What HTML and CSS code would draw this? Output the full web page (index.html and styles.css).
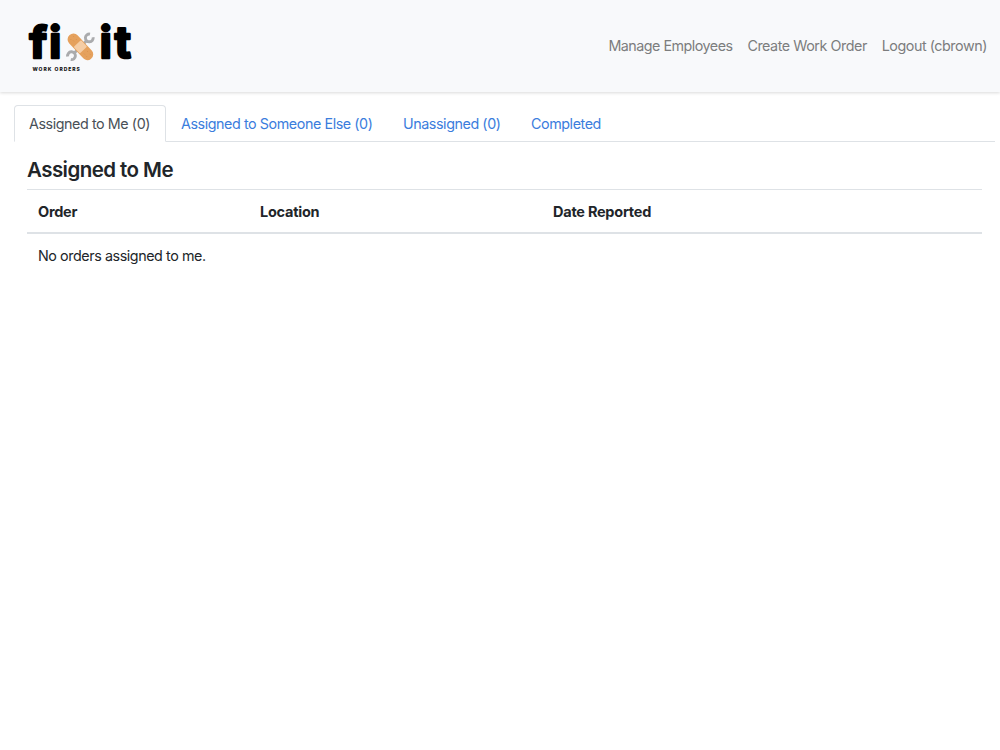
FILE: index.html
```html
<!DOCTYPE html>
<html lang="en">
<head>
<meta charset="utf-8">
<title>Fixit Work Orders</title>
<link rel="stylesheet" href="styles.css">
</head>
<body>
<header class="navbar">
  <a class="brand" href="#" aria-label="Fixit work orders">
    <svg class="logo" width="120" height="62" viewBox="0 0 120 62">
      <g class="wordmark">
        <text x="9.5 29.3" y="43">fi</text>
        <text x="79.8 94.8" y="43">it</text>
      </g>
      <g transform="translate(60.4 31.8)">
        <g class="wrench" transform="rotate(45)">
          <path d="M0-9V9"/>
          <path d="M-2.2-15.8A3.9 3.9 0 1 0 2.2-15.8M-2.2 15.8A3.9 3.9 0 1 1 2.2 15.8"/>
        </g>
        <g transform="rotate(47)">
          <rect class="bandage" x="-16" y="-5.8" width="32" height="11.6" rx="5.6"/>
          <rect class="pad" x="-4.5" y="-5" width="9" height="10" rx="1"/>
          <path class="holes" d="M-12-2h.1M-9 1h.1M-12 2h.1M-8-2h.1M8-2h.1M11 2h.1M12-2h.1M8 2h.1"/>
        </g>
      </g>
      <text class="tagline" x="12.5" y="55.5" textLength="47">WORK ORDERS</text>
    </svg>
  </a>
  <nav class="menu">
    <a class="employees" href="#">Manage Employees</a>
    <a class="create" href="#">Create Work Order</a>
    <a class="logout" href="#">Logout (cbrown)</a>
  </nav>
</header>
<main class="content">
  <nav class="tabs">
    <a class="tab mine active" href="#">Assigned to Me (0)</a>
    <a class="tab others" href="#">Assigned to Someone Else (0)</a>
    <a class="tab unassigned" href="#">Unassigned (0)</a>
    <a class="tab completed" href="#">Completed</a>
  </nav>
  <section class="panel">
    <h1>Assigned to Me</h1>
    <table>
      <thead><tr><th class="order">Order</th><th class="location">Location</th><th>Date Reported</th></tr></thead>
      <tbody><tr><td colspan="3">No orders assigned to me.</td></tr></tbody>
    </table>
  </section>
</main>
</body>
</html>
```

FILE: styles.css
```css
* { box-sizing: border-box; }
body {
  margin: 0;
  background: #fff;
  color: #212529;
  font: 14.3px/22px Inter, "Liberation Sans", sans-serif;
  letter-spacing: -0.42px;
}
a { text-decoration: none; white-space: nowrap; }
.navbar {
  height: 92px;
  padding: 0 13px 0 20px;
  display: flex;
  align-items: center;
  justify-content: space-between;
  background: #f8f9fb;
  box-shadow: 0 1px 3px rgba(0, 0, 0, .15);
}
.brand { display: flex; }
.logo { display: block; overflow: visible; }
.wordmark {
  font: 700 44px Inter, sans-serif;
  letter-spacing: 0;
  fill: #000;
  stroke: #000;
  stroke-width: 2.6px;
  stroke-linejoin: round;
}
.tagline { font: 800 5px Inter, sans-serif; fill: #111; }
.wrench { fill: none; stroke: #aaabad; stroke-width: 2.9px; }
.bandage { fill: #e5a15d; }
.pad { fill: #f5cda5; }
.holes { fill: none; stroke: #d48b45; stroke-width: .8px; stroke-linecap: round; }
.menu { display: flex; gap: 14.8px; }
.menu a { color: #7c7d7e; }
.employees { letter-spacing: -.5px; }
.create { letter-spacing: -.44px; }
.logout { letter-spacing: -.44px; }
.content { padding: 13px 5px 0 14px; }
.tabs {
  height: 37px;
  display: flex;
  border-bottom: 1px solid #dee2e6;
}
.tab {
  height: 37px;
  padding: 7px 14px;
  border: 1px solid transparent;
  border-radius: 4px 4px 0 0;
  color: #3b7ddd;
}
.active { color: #495057; background: #fff; border-color: #dee2e6 #dee2e6 #fff; }
.mine { width: 152px; }
.others { width: 222px; }
.unassigned { width: 128px; }
.panel { padding: 14px 13px 0 13px; }
h1 {
  margin: 0 0 6px;
  font-size: 20.5px;
  line-height: 27px;
  font-weight: 580;
  letter-spacing: -.56px;
}
table { width: 100%; table-layout: fixed; border-collapse: separate; border-spacing: 0; }
th {
  height: 45px;
  padding: 1px 11px 0;
  text-align: left;
  font-size: 14.5px;
  font-weight: 650;
  letter-spacing: -.25px;
  border-top: 1px solid #dee2e6;
  border-bottom: 2px solid #dee2e6;
}
.order { width: 222px; }
.location { width: 293px; }
td { height: 44px; padding: 0 11px; }
```
